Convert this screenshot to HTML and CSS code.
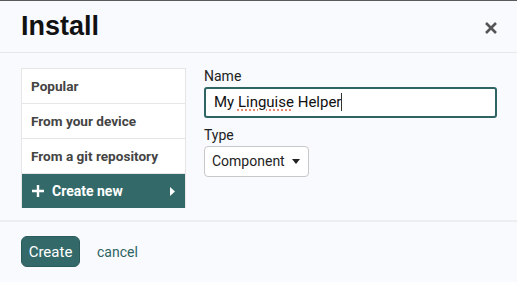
FILE: index.html
```html
<!DOCTYPE html>
<html>
<head>
<link rel="stylesheet" href="styles.css">
</head>
<body>
<div class="dialog">
	<div class="header">
		<h1>Install</h1>
		<span class="close">
			<svg width="12" height="12" viewBox="0 0 12 12"><path d="M1 1l10 10M11 1L1 11" stroke="#555" stroke-width="2.6"/></svg>
		</span>
	</div>
	<div class="content">
		<ul class="menu">
			<li>Popular</li>
			<li>From your device</li>
			<li>From a git repository</li>
			<li class="active">
				<span class="plus">
					<svg width="12" height="12" viewBox="0 0 12 12"><path d="M6 0v12M0 6h12" stroke="#fff" stroke-width="2.4"/></svg>
				</span>
				<span class="label">Create new</span>
				<span class="arrow">
					<svg width="6" height="9" viewBox="0 0 6 9"><path d="M0 0l5 4.5L0 9z" fill="#fff"/></svg>
				</span>
			</li>
		</ul>
		<div class="form">
			<label class="field-label">Name</label>
			<div class="input">My <span class="typo">Linguise</span> Helper<span class="caret"></span></div>
			<label class="field-label type">Type</label>
			<div class="select">Component <span class="tri"></span></div>
		</div>
	</div>
	<div class="footer">
		<button class="btn">Create</button>
		<a class="cancel">cancel</a>
	</div>
</div>
</body>
</html>
```
FILE: styles.css
```css
html, body {
	margin: 0;
	padding: 0;
	background: #f8fafd;
}
.dialog {
	border-top: 1px solid #5a5a5a;
	height: 281px;
	font-family: Roboto, "Liberation Sans", sans-serif;
}
.header {
	display: flex;
	align-items: center;
	justify-content: space-between;
	height: 51px;
	padding: 0 20px 0 21px;
	border-bottom: 1px solid #e6e8ea;
}
.header h1 {
	margin: 0;
	font-family: "Liberation Sans", Arial, sans-serif;
	font-size: 27px;
	font-weight: bold;
	color: #111;
}
.close {
	display: flex;
	margin-top: 2px;
}
.content {
	display: flex;
	padding: 15px 20px 0 21px;
	height: 152px;
}
.menu {
	list-style: none;
	margin: 0;
	padding: 0;
	width: 165px;
	border: 1px solid #e6e6e6;
	border-bottom: none;
	background: #fff;
	align-self: flex-start;
}
.menu li {
	height: 34px;
	line-height: 34px;
	padding-left: 9px;
	font-size: 13.6px;
	font-weight: bold;
	color: #444;
	border-bottom: 1px solid #e6e6e6;
}
.menu li.active {
	display: flex;
	align-items: center;
	background: #336a69;
	color: #fff;
	border-bottom: none;
	padding-left: 10px;
	padding-right: 9px;
	font-size: 14px;
}
.plus {
	display: flex;
	margin-right: 8px;
}
.label {
	flex: 1;
}
.arrow {
	display: flex;
}
.form {
	flex: 1;
	margin-left: 18px;
	display: flex;
	flex-direction: column;
	align-items: flex-start;
}
.field-label {
	font-size: 14px;
	color: #222;
	line-height: 18px;
	margin-top: -1px;
}
.field-label.type {
	margin-top: 8px;
}
.input {
	box-sizing: border-box;
	width: 293px;
	height: 31px;
	margin-top: 2px;
	border: 2px solid #2e6463;
	border-radius: 3px;
	background: #fff;
	padding-left: 8px;
	font-size: 15px;
	line-height: 27px;
	color: #111;
}
.typo {
	text-decoration: underline dotted #e06040;
	text-underline-offset: 3px;
}
.caret {
	display: inline-block;
	width: 1px;
	height: 18px;
	background: #333;
	vertical-align: -4px;
}
.select {
	box-sizing: border-box;
	height: 31px;
	margin-top: 2px;
	border: 1px solid #c8c8c8;
	border-radius: 4px;
	background: #fff;
	padding: 0 8px 0 7px;
	font-size: 14px;
	line-height: 29px;
	color: #222;
	display: flex;
	align-items: center;
}
.tri {
	margin-left: 7px;
	width: 0;
	height: 0;
	border-left: 4.5px solid transparent;
	border-right: 4.5px solid transparent;
	border-top: 5px solid #222;
}
.footer {
	border-top: 2px solid #eceeef;
	padding: 14px 21px;
	display: flex;
	align-items: center;
}
.btn {
	background: #336a69;
	color: #fff;
	border: 1px solid #2b5b5a;
	border-radius: 6px;
	height: 31px;
	width: 59px;
	font-family: Roboto, sans-serif;
	font-size: 15px;
	padding: 0;
}
.cancel {
	margin-left: 17px;
	color: #2e6463;
	font-size: 14px;
}
```
